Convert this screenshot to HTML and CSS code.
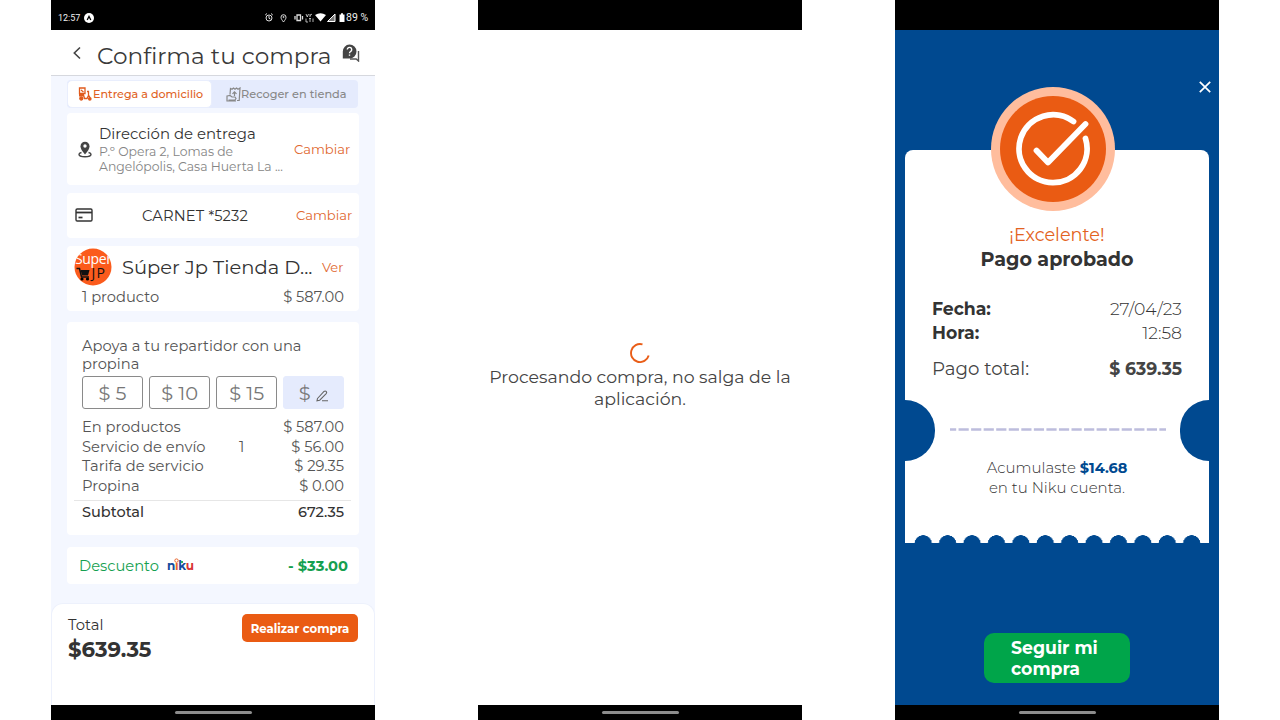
FILE: index.html
```html
<!DOCTYPE html>
<html lang="es">
<head>
<meta charset="utf-8">
<title>Confirma tu compra</title>
<link rel="stylesheet" href="styles.css">
</head>
<body>
<main class="board">
  <section class="phone checkout">
    <div class="status">
      <span class="clock">12:57</span>
      <svg class="app-dot" viewBox="0 0 10 10"><circle cx="5" cy="5" r="5" fill="#fff"/><path d="M3.200 7 5 3.500 6.800 7" fill="none" stroke="#000" stroke-width="1.300"/></svg>
      <svg class="sys" viewBox="0 0 82 12" fill="none" stroke="#ddd" stroke-width="1">
        <circle cx="5" cy="6" r="3"/><path d="M1.200 3 3 1.500M8.800 3 7 1.500M5 4v2.300l1.500.8"/>
        <path d="M19.500 10c-1.600-2.200-2.500-3.300-2.500-4.800a2.500 2.500 0 0 1 5 0c0 1.500-.9 2.600-2.500 4.800Z"/><circle cx="19.500" cy="5" r=".6"/>
        <path d="M33 3h3.500v5.500H33zM31 4v3.500M38.500 4v3.500" stroke-width="1.300"/>
        <path d="m42 2 1.300 3L44.500 2M46 2v3M46 3.500l2-1.500M42 6.500v3.500h2M45 6.500h2M46 6.500V10M49 6.500v3.500" stroke-width=".8"/>
        <path d="M51 3q5.500-3.500 11 0l-5.500 6.500Z" fill="#fff" stroke="none"/>
        <path d="M71 2v7.500h-7.500Z" fill="#777" stroke="#fff"/>
        <path d="M75.500 2.500H77V1.300h2v1.200h1.500V10h-5Z" fill="#fff" stroke="none"/>
      </svg>
      <span class="battery">89 %</span>
    </div>
    <header class="appbar">
      <svg class="back" viewBox="0 0 10 14"><path d="M8 1.500 2.300 7 8 12.500" fill="none" stroke="#444" stroke-width="1.600"/></svg>
      <h1 class="title">Confirma tu compra</h1>
      <svg class="help" viewBox="0 0 18 18"><path d="M16.500 7v10l-2.300-2H8" fill="none" stroke="#555" stroke-width="1.400"/><path d="M7.500.5a7 7 0 1 1 0 14H.8V7.500a7 7 0 0 1 6.700-7Z" fill="#444"/><path d="M5.300 5.500a2.200 2.200 0 1 1 3.300 2c-.8.500-1.100.8-1.100 1.700M7.500 10.400v1.400" stroke="#fff" stroke-width="1.400" fill="none"/></svg>
    </header>
    <div class="scroll">
      <nav class="tabs">
        <div class="tab tab-on">
          <svg class="moto" viewBox="0 0 14 14" fill="none" stroke="#e05a1c" stroke-width="1.300"><path d="M1.500 1H7v5.500H1.500zM3 3l2.500 2M1 8h4.500l1 3.500h2.500l1.500-3V4.500H9M10.500 8l1.500 2.500"/><circle cx="3.300" cy="11.500" r="1.500" fill="#e05a1c"/><circle cx="11.800" cy="11.800" r="1.200" fill="#e05a1c"/><path d="M1 8.500h4.500" stroke-width="2"/></svg>
          <span class="t-home">Entrega a domicilio</span>
        </div>
        <div class="tab">
          <svg class="store" viewBox="0 0 15 15" fill="none" stroke="#888" stroke-width="1.200"><path d="M4 7.500 4.500 1.500 6 2.300 7.500 1 9 2.300 10.500 1 12 2.300 14 1l-.8 12.500H11M8.500 9V5M6.500 6.800l2-2 2 2M1 9l3-.5 2 1.500h3l1 1.500-1 1.500H2.500M1 8.500V14h9"/></svg>
          <span class="t-store">Recoger en tienda</span>
        </div>
      </nav>
      <article class="card address">
        <svg class="pin" viewBox="0 0 14 17"><path d="M3.500 11.500C1.500 12 1 12.600 1 13.300 1 14.800 3.500 15.800 7 15.800s6-1 6-2.500c0-.7-.5-1.300-2.500-1.800" fill="none" stroke="#444" stroke-width="1.400"/><path d="M7 13.500C4 10 2.500 7.500 2.500 5.200a4.500 4.500 0 0 1 9 0C11.500 7.500 10 10 7 13.500Z" fill="#444"/><circle cx="7" cy="5" r="1.700" fill="#fff"/></svg>
        <div class="address-text">
          <div class="a-title">Dirección de entrega</div>
          <div class="a-sub">P.º Opera 2, Lomas de</div>
          <div class="a-sub">Angelópolis, Casa Huerta La ...</div>
        </div>
        <a class="change">Cambiar</a>
      </article>
      <article class="card payment">
        <svg class="credit" viewBox="0 0 18 14"><rect x="1" y="1" width="16" height="12" rx="1.200" fill="none" stroke="#333" stroke-width="1.400"/><path d="M1 4.500h16" stroke="#333" stroke-width="1.800"/><path d="M3.500 9.500h4" stroke="#333" stroke-width="1.700"/></svg>
        <span class="carnet">CARNET *5232</span>
        <a class="change">Cambiar</a>
      </article>
      <article class="card shop">
        <div class="shop-head">
          <svg class="logo" viewBox="0 0 38 38"><defs><clipPath id="disc"><circle cx="19" cy="19" r="18.500"/></clipPath></defs><circle cx="19" cy="19" r="18.500" fill="#fb5b1c"/><g clip-path="url(#disc)"><text x="1" y="16" class="logo-super" textLength="37">Super</text></g><text x="17.500" y="30" class="logo-jp" textLength="13.500">JP</text><path d="M2.500 20.500h3l2 8.500h7.500" fill="none" stroke="#111" stroke-width="1.500"/><path d="M6.500 22h9l-1.500 5.500H8Z" fill="#111"/><circle cx="8" cy="31" r="1.600"/><circle cx="13.500" cy="31" r="1.600"/></svg>
          <span class="shop-name">Súper Jp Tienda D...</span>
          <a class="see">Ver</a>
        </div>
        <div class="shop-row"><span>1 producto</span><span>$ 587.00</span></div>
      </article>
      <article class="card summary">
        <div class="tip-text">Apoya a tu repartidor con una<br>propina</div>
        <div class="tips">
          <span class="tip">$ 5</span><span class="tip">$ 10</span><span class="tip">$ 15</span>
          <span class="tip tip-edit">$<svg class="pencil" viewBox="0 0 13 13"><path d="m1.500 9.500 6.500-7q1.200-1 2.200 0t0 2.200l-6.500 6.500-2.700.6ZM6 11.800h6" fill="none" stroke="#666" stroke-width="1.100"/></svg></span>
        </div>
        <div class="lines">
          <div class="line"><span>En productos</span><span class="amount">$ 587.00</span></div>
          <div class="line"><span>Servicio de envío</span><span class="qty">1</span><span class="amount">$ 56.00</span></div>
          <div class="line"><span>Tarifa de servicio</span><span class="amount">$ 29.35</span></div>
          <div class="line"><span>Propina</span><span class="amount">$ 0.00</span></div>
        </div>
        <div class="subtotal"><span>Subtotal</span><span>672.35</span></div>
      </article>
      <article class="card discount">
        <span class="d-label">Descuento</span>
        <svg class="niku" viewBox="0 0 28 14"><text x="0" y="12" textLength="27"><tspan fill="#174b9c">n</tspan><tspan fill="#e9652b">ı</tspan><tspan fill="#174b9c">k</tspan><tspan fill="#d93636">u</tspan></text><circle cx="9.500" cy="2.600" r="1.700" fill="none" stroke="#e9652b"/><path d="M15 3v2" stroke="#1ca552" stroke-width="1.800"/></svg>
        <span class="d-value">- $33.00</span>
      </article>
    </div>
    <footer class="total">
      <div><div class="tot-l">Total</div><div class="tot-v">$639.35</div></div>
      <button class="buy">Realizar compra</button>
    </footer>
    <div class="navbar"><i class="pill"></i></div>
  </section>

  <section class="phone loading">
    <div class="status"></div>
    <div class="wait">
      <svg class="spinner" viewBox="0 0 20 20"><path d="M12.500 1.400A9 9 0 1 0 18.700 12.500" fill="none" stroke="#e95d17" stroke-width="1.900"/></svg>
      <p class="wait-text">Procesando compra, no salga de la<br>aplicación.</p>
    </div>
    <div class="navbar"><i class="pill"></i></div>
  </section>

  <section class="phone done">
    <div class="status"></div>
    <div class="done-body">
      <svg class="close" viewBox="0 0 12 12"><path d="m.8.800 10.400 10.400M11.200.8.800 11.200" stroke="#fff" stroke-width="1.700"/></svg>
      <div class="ticket">
        <svg class="badge" viewBox="0 0 124 124" fill="none"><circle cx="62" cy="62" r="62" fill="#ffbd9d"/><circle cx="62" cy="62" r="53" fill="#ea5b13"/><g stroke="#fff" stroke-width="5.800" stroke-linecap="round" stroke-linejoin="round"><path d="M82.500 34.500A34 34 0 1 0 94.500 51.500"/><path d="M45.500 63.500 57 75.500 94.500 37"/></g></svg>
        <div class="ok">¡Excelente!</div>
        <div class="approved">Pago aprobado</div>
        <div class="info fecha"><b>Fecha:</b><span class="stamp">27/04/23</span></div>
        <div class="info"><b>Hora:</b><span class="stamp">12:58</span></div>
        <div class="info paid"><span class="paid-label">Pago total:</span><b>$ 639.35</b></div>
        <div class="tear"><i class="notch notch-l"></i><svg class="dash" viewBox="0 0 216 3"><path d="M0 1.500h216" stroke="#bdbddd" stroke-width="2.400" stroke-dasharray="10.200 2.350" stroke-dashoffset="4"/></svg><i class="notch notch-r"></i></div>
        <div class="earn">Acumulaste <b>$14.68</b><br>en tu Niku cuenta.</div>
        <div class="scallops"></div>
      </div>
      <button class="follow"><span>Seguir mi</span><span>compra</span></button>
    </div>
    <div class="navbar"><i class="pill"></i></div>
  </section>
</main>
</body>
</html>
```
FILE: styles.css
```css
* { box-sizing: border-box; }
body { margin: 0; background: #fff; color: #333; font-family: Montserrat, Inter, sans-serif; }
h1, p { margin: 0; font-weight: 400; }
svg { display: block; flex: none; }
button { border: 0; font-family: inherit; }
span, a, b, .address-text, .line { white-space: nowrap; }

.board { width: 1280px; height: 720px; overflow: hidden; display: grid; grid-template-columns: 427px 417px 324px; padding-left: 51px; }
.phone { width: 324px; height: 720px; display: grid; grid-template-rows: 30px 1fr 15px; }
.checkout { grid-template-rows: 30px 46px 527px 102px 15px; background: #f4f7ff; }
.status { background: #000; color: #eee; display: flex; align-items: center; padding: 5px 7px 0; font: 10px Roboto, sans-serif; }
.clock { width: 22px; font-size: 9px; }
.app-dot { width: 10px; height: 10px; margin-left: 4px; }
.sys { width: 82px; height: 12px; margin-left: auto; }
.battery { width: 22px; font-size: 10.500px; }
.navbar { background: #000; display: flex; justify-content: center; padding-top: 6px; }
.pill { width: 77px; height: 3px; border-radius: 2px; background: #8c8c8c; }

.appbar { display: flex; background: #fff; border-bottom: 1px solid #d6d8de; padding: 0 15px 0 21px; }
.back { width: 10px; height: 14px; margin-top: 16px; }
.title { margin-left: 15px; width: 235px; line-height: 53px; font-size: 23.200px; white-space: nowrap; color: #3a3a3a; }
.help { width: 18px; height: 18px; margin: 14px 0 0 10px; }
.scroll { padding: 4px 16px 0; }
.tabs { display: grid; grid-template-columns: 145px 145px; width: 291px; height: 28px; background: #e5ebfd; border-radius: 4px; color: #888; }
.tab { display: flex; align-items: center; padding-left: 14px; font-size: 11.300px; font-weight: 500; }
.tab-on { background: #fff; color: #e06224; border: 1.500px solid #e9eefd; border-radius: 5px; padding-left: 10px; font-size: 11.150px; }
.moto { width: 14px; height: 14px; margin-right: 1px; }
.store { width: 15px; height: 15px; }

.card { width: 292px; background: #fff; border-radius: 4px; }
.address { display: flex; height: 72px; margin-top: 5px; padding-left: 11px; }
.pin { width: 14px; height: 17px; margin-top: 28px; }
.address-text { width: 195px; margin-left: 7px; padding-top: 12px; }
.a-title { font-size: 14.900px; line-height: 19px; }
.a-sub { font-size: 12.400px; line-height: 15px; color: #858585; }
.change { color: #df682f; font-size: 13.100px; line-height: 72px; }
.payment { display: flex; height: 45px; margin-top: 8px; align-items: center; padding-left: 8px; }
.credit { width: 18px; height: 14px; margin-top: -2px; }
.carnet { width: 154px; margin-left: 49px; font-size: 14.700px; letter-spacing: .15px; }
.payment .change { line-height: 45px; }
.shop { height: 65px; margin-top: 8px; }
.shop-head { display: flex; height: 42px; align-items: center; padding-left: 7px; }
.logo { width: 38px; height: 38px; }
.logo-super { font: 14px "Open Sans", sans-serif; fill: #fff; }
.logo-jp { font: 14px "Open Sans", sans-serif; fill: #111; }
.shop-name { width: 200px; margin-left: 10px; font-size: 19.500px; }
.see { font-size: 13px; color: #df682f; }
.shop-row { display: flex; justify-content: space-between; padding: 0 15px; font-size: 14.700px; line-height: 18px; color: #555; }

.summary { height: 213px; margin-top: 11px; padding: 15px 15px 0; font-size: 14.700px; color: #555; }
.tip-text { line-height: 18px; white-space: nowrap; }
.tips { display: grid; grid-template-columns: repeat(4, 61px); column-gap: 6.100px; margin-top: 3px; height: 33px; }
.tip { display: flex; align-items: center; justify-content: center; border: 1px solid #8a8a8a; border-radius: 3px; font-size: 19.400px; color: #777; }
.tip-edit { border-color: #e5ebfd; background: #e5ebfd; }
.pencil { width: 13px; height: 13px; margin: 5px 0 0 5px; }
.lines { padding-top: 9px; }
.line { display: grid; grid-template-columns: 155px 30px 1fr; line-height: 19.500px; }
.qty { grid-column: 2; padding-left: 2px; }
.amount { grid-column: 3; text-align: right; }
.subtotal { display: flex; justify-content: space-between; margin: 4px -7px 0 -8px; padding: 0 7px 0 8px; border-top: 1px solid #e6e6e6; line-height: 22px; color: #333; font-size: 14.500px; font-weight: 500; }
.discount { display: flex; height: 37px; margin-top: 12px; align-items: center; padding: 0 11px 0 12px; color: #159f50; font-size: 14.700px; }
.d-label { width: 88px; }
.d-value { margin-left: auto; font-weight: 700; }
.niku { width: 28px; height: 14px; font-size: 12px; font-weight: 700; margin-top: -2px; }
.total { display: flex; justify-content: space-between; align-items: flex-start; background: #fff; border-radius: 12px 12px 0 0; border: 1px solid #edf1fc; border-bottom: 0; padding: 10px 16px 0; }
.tot-l { font-size: 14.800px; line-height: 23px; }
.tot-v { font-size: 21.200px; line-height: 25px; font-weight: 700; }
.buy { width: 116px; height: 28px; background: #ea5b13; color: #fff; border-radius: 5px; font-size: 11.700px; font-weight: 700; padding: 1px 0 0; white-space: nowrap; }

.wait { display: flex; flex-direction: column; align-items: center; padding-top: 313px; }
.spinner { width: 20px; height: 20px; }
.wait-text { padding-top: 3px; font-size: 17.350px; line-height: 21.500px; text-align: center; white-space: nowrap; color: #444; }

.done-body { background: #004990; padding: 51px 10px 0; }
.close { width: 12px; height: 12px; margin-left: auto; margin-right: -2px; }
.ticket { height: 393px; margin-top: 57px; background: #fff; border-radius: 8px 8px 0 0; display: flex; flex-direction: column; }
.badge { width: 124px; height: 124px; margin: -63px 0 0 86px; }
.ok { margin-top: 11px; line-height: 25px; text-align: center; color: #e36221; font-size: 17.700px; }
.approved { line-height: 26px; text-align: center; font-weight: 700; font-size: 19.100px; }
.info { display: flex; justify-content: space-between; line-height: 24px; font-size: 17.250px; padding: 0 27px; }
.fecha { margin-top: 24px; }
.stamp { font-weight: 300; }
.paid { margin-top: 12px; color: #444; }
.paid-label { font-size: 18.200px; }
.tear { display: flex; justify-content: space-between; align-items: center; height: 61px; margin-top: 19px; }
.notch { width: 30px; height: 61px; background: #004990; }
.notch-l { border-radius: 0 30px 30px 0; }
.notch-r { width: 29px; border-radius: 30px 0 0 30px; }
.dash { width: 216px; height: 3px; margin-bottom: 3px; }
.earn { margin-top: -3px; text-align: center; font-size: 15px; line-height: 20px; font-weight: 300; }
.earn b { color: #004990; font-size: 14.500px; font-weight: 700; }
.scallops { height: 8px; width: 293px; margin: auto 0 0 5.500px; background: radial-gradient(circle at 12.200px 9px, #004990 8.500px, transparent 9px) 0 0 / 24.420px 8px repeat-x; }
.follow { display: flex; flex-direction: column; align-items: flex-start; width: 146px; height: 50px; margin: 90px 0 0 79px; padding: 4px 27px 0; border-radius: 10px; background: #00a54a; color: #fff; font-size: 17.300px; font-weight: 700; line-height: 21px; }
```
